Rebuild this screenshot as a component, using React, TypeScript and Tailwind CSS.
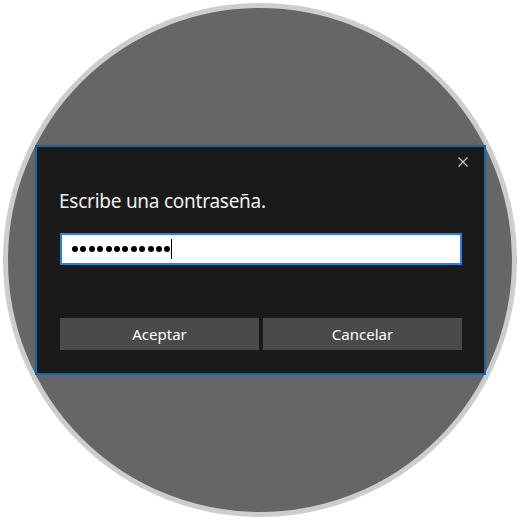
import React from "react";

const dots = Array.from({ length: 12 });

export default function App() {
  return (
    <div className="w-[520px] h-[520px] bg-white p-[3px]" style={{ fontFamily: '"Noto Sans", "Open Sans", sans-serif' }}>
      <div className="w-[514px] h-[514px] rounded-full bg-[#666666] border-[5px] border-[#cdcdcd] pl-[27px] pt-[137px]">
        {/* dialog */}
        <div className="w-[451px] h-[230px] bg-[#1a1a1a] border-2 border-[#1a64a8] flex flex-col px-[22px] pb-[23px]">
          <div className="flex justify-end pt-[10px] -mr-[6px]">
            <svg width="10" height="10" viewBox="0 0 10 10" className="block">
              <path d="M0.5 0.5 L9.5 9.5 M9.5 0.5 L0.5 9.5" stroke="#c8c8c8" strokeWidth="1.2" />
            </svg>
          </div>
          <div className="mt-[21px] text-[19px] leading-[26px] tracking-[-0.25px] text-[#f0f0f0]">Escribe una contraseña.</div>
          <div className="mt-[19px] ml-[1px] h-[32px] bg-white border-2 border-[#2a83d8] flex items-center pl-[10px]">
            <div className="flex gap-[2.4px]">
              {dots.map((_, i) => (
                <div key={i} className="w-[6px] h-[6px] rounded-full bg-black" />
              ))}
            </div>
            <div className="w-[1px] h-[20px] bg-black ml-[1px]" />
          </div>
          <div className="mt-auto ml-[1px] flex gap-[4px]">
            <button className="w-[199px] h-[32px] bg-[#4a4a4a] text-white text-[15px]">Aceptar</button>
            <button className="w-[199px] h-[32px] bg-[#4a4a4a] text-white text-[15px]">Cancelar</button>
          </div>
        </div>
      </div>
    </div>
  );
}
